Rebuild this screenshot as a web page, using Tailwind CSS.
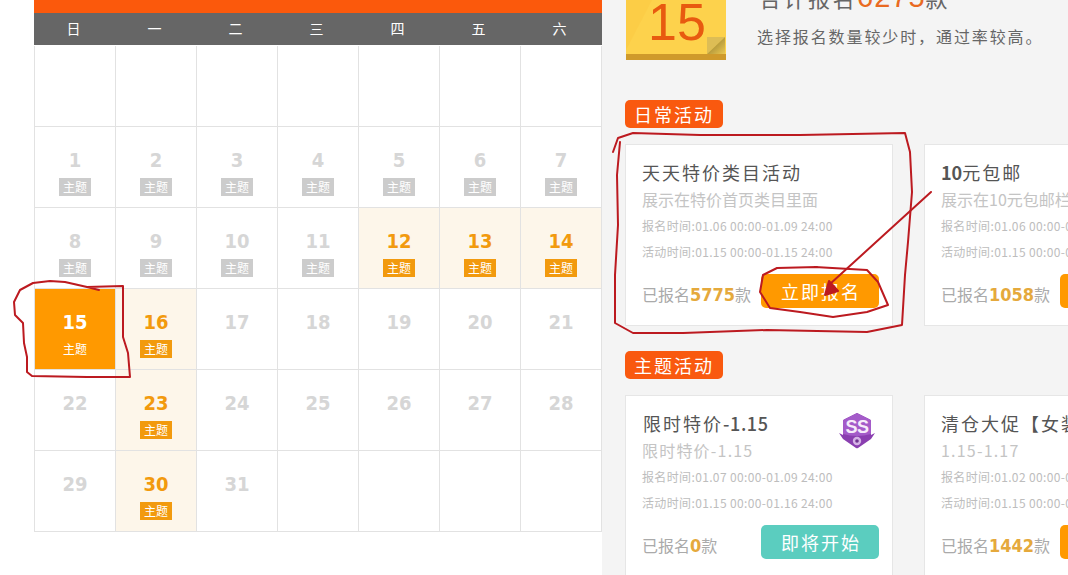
<!DOCTYPE html>
<html lang="zh">
<head>
<meta charset="utf-8">
<script src="https://cdn.jsdelivr.net/npm/@tailwindcss/browser@4"></script>
</head>
<body class="m-0 bg-white">
<div class="relative flex w-[1068px] h-[575px] overflow-hidden font-['Noto_Sans_CJK_SC','Liberation_Sans',sans-serif]">

  <!-- calendar -->
  <div class="w-[602px] shrink-0 pl-[34px] bg-white">
    <div class="h-[13px] bg-[#fb590c]"></div>
    <div class="grid grid-cols-[repeat(7,81px)] h-[32px] w-[568px] pr-[2px] bg-[#666666] text-white text-[14px] leading-[30px] text-center">
      <div class="pr-[2px]">日</div><div class="pr-[2px]">一</div><div class="pr-[2px]">二</div><div class="pr-[2px]">三</div><div class="pr-[2px]">四</div><div class="pr-[2px]">五</div><div class="pr-[2px]">六</div>
    </div>
    <div class="mt-px grid grid-cols-[repeat(7,81px)] grid-rows-[repeat(6,81px)] w-[568px] border-l border-[#e2e2e2] text-center font-['DejaVu_Sans_Condensed','DejaVu_Sans',sans-serif] text-[20px] font-bold leading-[24px] text-[#d6d6d6]">
      <div class="border-r border-b border-[#e2e2e2]"></div>
      <div class="border-r border-b border-[#e2e2e2]"></div>
      <div class="border-r border-b border-[#e2e2e2]"></div>
      <div class="border-r border-b border-[#e2e2e2]"></div>
      <div class="border-r border-b border-[#e2e2e2]"></div>
      <div class="border-r border-b border-[#e2e2e2]"></div>
      <div class="border-r border-b border-[#e2e2e2]"></div>

      <div class="flex flex-col items-center pt-[21px] border-r border-b border-[#e2e2e2]">1<span class="mt-[6px] w-[32px] h-[18px] bg-[#cccccc] text-white text-[12px] font-normal leading-[18px] font-['Noto_Sans_CJK_SC']">主题</span></div>
      <div class="flex flex-col items-center pt-[21px] border-r border-b border-[#e2e2e2]">2<span class="mt-[6px] w-[32px] h-[18px] bg-[#cccccc] text-white text-[12px] font-normal leading-[18px] font-['Noto_Sans_CJK_SC']">主题</span></div>
      <div class="flex flex-col items-center pt-[21px] border-r border-b border-[#e2e2e2]">3<span class="mt-[6px] w-[32px] h-[18px] bg-[#cccccc] text-white text-[12px] font-normal leading-[18px] font-['Noto_Sans_CJK_SC']">主题</span></div>
      <div class="flex flex-col items-center pt-[21px] border-r border-b border-[#e2e2e2]">4<span class="mt-[6px] w-[32px] h-[18px] bg-[#cccccc] text-white text-[12px] font-normal leading-[18px] font-['Noto_Sans_CJK_SC']">主题</span></div>
      <div class="flex flex-col items-center pt-[21px] border-r border-b border-[#e2e2e2]">5<span class="mt-[6px] w-[32px] h-[18px] bg-[#cccccc] text-white text-[12px] font-normal leading-[18px] font-['Noto_Sans_CJK_SC']">主题</span></div>
      <div class="flex flex-col items-center pt-[21px] border-r border-b border-[#e2e2e2]">6<span class="mt-[6px] w-[32px] h-[18px] bg-[#cccccc] text-white text-[12px] font-normal leading-[18px] font-['Noto_Sans_CJK_SC']">主题</span></div>
      <div class="flex flex-col items-center pt-[21px] border-r border-b border-[#e2e2e2]">7<span class="mt-[6px] w-[32px] h-[18px] bg-[#cccccc] text-white text-[12px] font-normal leading-[18px] font-['Noto_Sans_CJK_SC']">主题</span></div>

      <div class="flex flex-col items-center pt-[21px] border-r border-b border-[#e2e2e2]">8<span class="mt-[6px] w-[32px] h-[18px] bg-[#cccccc] text-white text-[12px] font-normal leading-[18px] font-['Noto_Sans_CJK_SC']">主题</span></div>
      <div class="flex flex-col items-center pt-[21px] border-r border-b border-[#e2e2e2]">9<span class="mt-[6px] w-[32px] h-[18px] bg-[#cccccc] text-white text-[12px] font-normal leading-[18px] font-['Noto_Sans_CJK_SC']">主题</span></div>
      <div class="flex flex-col items-center pt-[21px] border-r border-b border-[#e2e2e2]">10<span class="mt-[6px] w-[32px] h-[18px] bg-[#cccccc] text-white text-[12px] font-normal leading-[18px] font-['Noto_Sans_CJK_SC']">主题</span></div>
      <div class="flex flex-col items-center pt-[21px] border-r border-b border-[#e2e2e2]">11<span class="mt-[6px] w-[32px] h-[18px] bg-[#cccccc] text-white text-[12px] font-normal leading-[18px] font-['Noto_Sans_CJK_SC']">主题</span></div>
      <div class="flex flex-col items-center pt-[21px] border-r border-b border-[#e2e2e2] bg-[#fdf6ea] text-[#f29a0e]">12<span class="mt-[6px] w-[32px] h-[18px] bg-[#f29a0e] text-white text-[12px] font-normal leading-[18px] font-['Noto_Sans_CJK_SC']">主题</span></div>
      <div class="flex flex-col items-center pt-[21px] border-r border-b border-[#e2e2e2] bg-[#fdf6ea] text-[#f29a0e]">13<span class="mt-[6px] w-[32px] h-[18px] bg-[#f29a0e] text-white text-[12px] font-normal leading-[18px] font-['Noto_Sans_CJK_SC']">主题</span></div>
      <div class="flex flex-col items-center pt-[21px] border-r border-b border-[#e2e2e2] bg-[#fdf6ea] text-[#f29a0e]">14<span class="mt-[6px] w-[32px] h-[18px] bg-[#f29a0e] text-white text-[12px] font-normal leading-[18px] font-['Noto_Sans_CJK_SC']">主题</span></div>

      <div class="flex flex-col items-center pt-[21px] border-r border-b border-[#e2e2e2] bg-[#ff9900] text-white">15<span class="mt-[6px] w-[32px] h-[18px] text-white text-[12px] font-normal leading-[18px] font-['Noto_Sans_CJK_SC']">主题</span></div>
      <div class="flex flex-col items-center pt-[21px] border-r border-b border-[#e2e2e2] bg-[#fdf6ea] text-[#f29a0e]">16<span class="mt-[6px] w-[32px] h-[18px] bg-[#f29a0e] text-white text-[12px] font-normal leading-[18px] font-['Noto_Sans_CJK_SC']">主题</span></div>
      <div class="pt-[21px] border-r border-b border-[#e2e2e2]">17</div>
      <div class="pt-[21px] border-r border-b border-[#e2e2e2]">18</div>
      <div class="pt-[21px] border-r border-b border-[#e2e2e2]">19</div>
      <div class="pt-[21px] border-r border-b border-[#e2e2e2]">20</div>
      <div class="pt-[21px] border-r border-b border-[#e2e2e2]">21</div>

      <div class="pt-[21px] border-r border-b border-[#e2e2e2]">22</div>
      <div class="flex flex-col items-center pt-[21px] border-r border-b border-[#e2e2e2] bg-[#fdf6ea] text-[#f29a0e]">23<span class="mt-[6px] w-[32px] h-[18px] bg-[#f29a0e] text-white text-[12px] font-normal leading-[18px] font-['Noto_Sans_CJK_SC']">主题</span></div>
      <div class="pt-[21px] border-r border-b border-[#e2e2e2]">24</div>
      <div class="pt-[21px] border-r border-b border-[#e2e2e2]">25</div>
      <div class="pt-[21px] border-r border-b border-[#e2e2e2]">26</div>
      <div class="pt-[21px] border-r border-b border-[#e2e2e2]">27</div>
      <div class="pt-[21px] border-r border-b border-[#e2e2e2]">28</div>

      <div class="pt-[21px] border-r border-b border-[#e2e2e2]">29</div>
      <div class="flex flex-col items-center pt-[21px] border-r border-b border-[#e2e2e2] bg-[#fdf6ea] text-[#f29a0e]">30<span class="mt-[6px] w-[32px] h-[18px] bg-[#f29a0e] text-white text-[12px] font-normal leading-[18px] font-['Noto_Sans_CJK_SC']">主题</span></div>
      <div class="pt-[21px] border-r border-b border-[#e2e2e2]">31</div>
      <div class="border-r border-b border-[#e2e2e2]"></div>
      <div class="border-r border-b border-[#e2e2e2]"></div>
      <div class="border-r border-b border-[#e2e2e2]"></div>
      <div class="border-r border-b border-[#e2e2e2]"></div>
    </div>
  </div>

  <!-- right panel -->
  <div class="flex-1 min-w-0 overflow-hidden bg-[#f4f4f4] pl-[23px]">
    <div class="flex h-[60px] gap-[31px]">
      <div class="relative shrink-0 w-[100px] h-[60px] ml-px overflow-hidden">
        <svg class="absolute inset-0" width="100" height="60" viewBox="0 0 100 60">
          <defs>
            <linearGradient id="fold" x1="0" y1="0" x2="1" y2="1">
              <stop offset="0" stop-color="#84702a"/>
              <stop offset="1" stop-color="#ecc850"/>
            </linearGradient>
          </defs>
          <rect width="100" height="55" fill="#fdd24c"/>
          <path d="M0 50L26 0H0Z" fill="#fbc83f" opacity=".5"/>
          <rect y="54" width="100" height="6" fill="#cf9a2b"/>
          <path d="M81 54V37H99Z" fill="#ddbd55"/>
          <path d="M81 54L99 37V54Z" fill="url(#fold)"/>
        </svg>
        <div class="absolute left-[22px] top-[-8px] font-['Liberation_Sans',sans-serif] text-[52px] leading-[60px] text-[#e85a10]">15</div>
      </div>
      <div class="-mt-[17px] min-w-0 whitespace-nowrap">
        <div class="h-[28px] pl-[2px] text-[22px] leading-[28px] tracking-[2.5px] text-[#666666]">合计报名<span class="font-['Liberation_Sans',sans-serif] font-medium tracking-[1px] text-[#e96a22] text-[29px]">6275</span>款</div>
        <div class="mt-[13px] text-[16px] leading-[24px] tracking-[1.9px] text-[#666666]">选择报名数量较少时，通过率较高。</div>
      </div>
    </div>

    <div class="mt-[40px] w-[98px] h-[28px] rounded-[5px] bg-[#f9590f] text-center text-white text-[18px] leading-[28px] tracking-[2px]">日常活动</div>
    <div class="mt-[16px] flex gap-[31px] whitespace-nowrap">
      <div class="relative shrink-0 w-[268px] h-[182px] pl-[16px] pr-[13px] pt-[15px] bg-white border border-[#e6e6e6]">
        <div class="h-[24px] text-[18px] leading-[24px] tracking-[2px] text-[#555555]">天天特价类目活动</div>
        <div class="mt-[3px] h-[24px] text-[16px] leading-[24px] text-[#c4c4c4]">展示在特价首页类目里面</div>
        <div class="mt-[2px] h-[26px] text-[12px] leading-[26px] tracking-[0.36px] text-[#bdbdbd]">报名时间:01.06 00:00-01.09 24:00</div>
        <div class="h-[26px] text-[12px] leading-[26px] tracking-[0.36px] text-[#bdbdbd]">活动时间:01.15 00:00-01.15 24:00</div>
        <div class="mt-[9px] flex items-center justify-between">
          <div class="pt-[6px] text-[16px] leading-[26px] text-[#aaaaaa]">已报名<span class="font-['DejaVu_Sans_Condensed','DejaVu_Sans',sans-serif] font-bold text-[18px] text-[#e5a93c]">5775</span>款</div>
          <div class="w-[118px] h-[34px] pl-[2px] rounded-[5px] bg-[#ff9900] text-center text-white text-[18px] leading-[34px] tracking-[2px]">立即报名</div>
        </div>
      </div>
      <div class="relative shrink-0 w-[268px] h-[182px] pl-[16px] pr-[13px] pt-[15px] bg-white border border-[#e6e6e6]">
        <div class="h-[24px] text-[18px] leading-[24px] tracking-[2px] text-[#555555]"><span class="font-bold tracking-normal">10</span>元包邮</div>
        <div class="mt-[3px] h-[24px] text-[16px] leading-[24px] text-[#c4c4c4]">展示在10元包邮栏目里面</div>
        <div class="mt-[2px] h-[26px] text-[12px] leading-[26px] tracking-[0.36px] text-[#bdbdbd]">报名时间:01.06 00:00-01.09 24:00</div>
        <div class="h-[26px] text-[12px] leading-[26px] tracking-[0.36px] text-[#bdbdbd]">活动时间:01.15 00:00-01.15 24:00</div>
        <div class="mt-[9px] flex items-center justify-between">
          <div class="pt-[6px] text-[16px] leading-[26px] text-[#aaaaaa]">已报名<span class="font-['DejaVu_Sans_Condensed','DejaVu_Sans',sans-serif] font-bold text-[18px] text-[#e5a93c]">1058</span>款</div>
          <div class="w-[118px] h-[34px] pl-[2px] rounded-[5px] bg-[#ff9900] text-center text-white text-[18px] leading-[34px] tracking-[2px]">立即报名</div>
        </div>
      </div>
    </div>

    <div class="mt-[25px] w-[98px] h-[28px] rounded-[5px] bg-[#f9590f] text-center text-white text-[18px] leading-[28px] tracking-[2px]">主题活动</div>
    <div class="mt-[16px] flex gap-[31px] whitespace-nowrap">
      <div class="relative shrink-0 w-[268px] h-[182px] pl-[16px] pr-[13px] pt-[15px] bg-white border border-[#e6e6e6]">
        <div class="h-[24px] pl-px text-[18px] leading-[24px] tracking-[2px] text-[#555555]">限时特价<span class="font-medium tracking-[0.6px]">-1.15</span></div>
        <div class="mt-[3px] h-[24px] text-[16px] leading-[24px] tracking-[1.2px] text-[#c4c4c4]">限时特价-1.15</div>
        <div class="mt-[2px] h-[26px] text-[12px] leading-[26px] tracking-[0.36px] text-[#bdbdbd]">报名时间:01.07 00:00-01.09 24:00</div>
        <div class="h-[26px] text-[12px] leading-[26px] tracking-[0.36px] text-[#bdbdbd]">活动时间:01.15 00:00-01.16 24:00</div>
        <div class="mt-[9px] flex items-center justify-between">
          <div class="pt-[6px] text-[16px] leading-[26px] text-[#aaaaaa]">已报名<span class="font-['DejaVu_Sans_Condensed','DejaVu_Sans',sans-serif] font-bold text-[18px] text-[#e5a93c]">0</span>款</div>
          <div class="w-[118px] h-[34px] pl-[2px] rounded-[5px] bg-[#5bcdbf] text-center text-white text-[18px] leading-[34px] tracking-[2px]">即将开始</div>
        </div>
        <svg class="absolute right-[17px] top-[17px]" width="36" height="36" viewBox="0 0 36 36">
          <path d="M18 0L31 6.5Q32 7 32 8.5V22L36 20 32 26 19 35Q18 35.5 17 35L4 26 0 20 4 22V8.5Q4 7 5 6.5Z" fill="#8a3fb0"/>
          <path d="M18 0L31 6.5Q32 7 32 8.5V21Q18 25 4 21V8.5Q4 7 5 6.5Z" fill="#a45bc9"/>
          <text x="18" y="20" text-anchor="middle" font-family="Liberation Sans" font-weight="700" font-size="18" letter-spacing="-.5" fill="#f6ecfb">SS</text>
          <circle cx="18" cy="28" r="4.2" fill="#d5b2e6"/>
          <circle cx="18" cy="28" r="1.8" fill="#6e3490"/>
        </svg>
      </div>
      <div class="relative shrink-0 w-[268px] h-[182px] pl-[16px] pr-[13px] pt-[15px] bg-white border border-[#e6e6e6]">
        <div class="h-[24px] text-[18px] leading-[24px] tracking-[2px] text-[#555555]">清仓大促【女装】</div>
        <div class="mt-[3px] h-[24px] text-[16px] leading-[24px] tracking-[1.2px] text-[#c4c4c4]">1.15-1.17</div>
        <div class="mt-[2px] h-[26px] text-[12px] leading-[26px] tracking-[0.36px] text-[#bdbdbd]">报名时间:01.02 00:00-01.09 24:00</div>
        <div class="h-[26px] text-[12px] leading-[26px] tracking-[0.36px] text-[#bdbdbd]">活动时间:01.15 00:00-01.17 24:00</div>
        <div class="mt-[9px] flex items-center justify-between">
          <div class="pt-[6px] text-[16px] leading-[26px] text-[#aaaaaa]">已报名<span class="font-['DejaVu_Sans_Condensed','DejaVu_Sans',sans-serif] font-bold text-[18px] text-[#e5a93c]">1442</span>款</div>
          <div class="w-[118px] h-[34px] pl-[2px] rounded-[5px] bg-[#ff9900] text-center text-white text-[18px] leading-[34px] tracking-[2px]">立即报名</div>
        </div>
      </div>
    </div>
  </div>

  <!-- hand-drawn red annotations -->
  <svg class="absolute inset-0 pointer-events-none" width="1068" height="575" viewBox="0 0 1068 575" fill="none" stroke="#bc1a20" stroke-width="2" stroke-linejoin="round" stroke-linecap="round">
    <path d="M99 290L87 287 65 282 50 281 33 283 20 290 14 302 15 315 23 323 24 343 27 357 27 372 32 376 87 377 130 377 128 353 123 337 123 286 87 287"/>
    <path d="M613 152L618 138 633 133 700 135 800 135 905 133 910 152 912 192 908 242 905 275 902 325 867 332 767 330 683 333 633 333 615 323 615 275 618 225 617 175 620 142"/>
    <path d="M815 267L867 270 878 282 888 305 867 312 833 317 800 312 770 308 760 292 763 275 777 268 817 267"/>
    <path d="M931 192L830 284"/>
    <path d="M825 295L829 281 838 291Z" fill="#bc1a20"/>
  </svg>
</div>
</body>
</html>
